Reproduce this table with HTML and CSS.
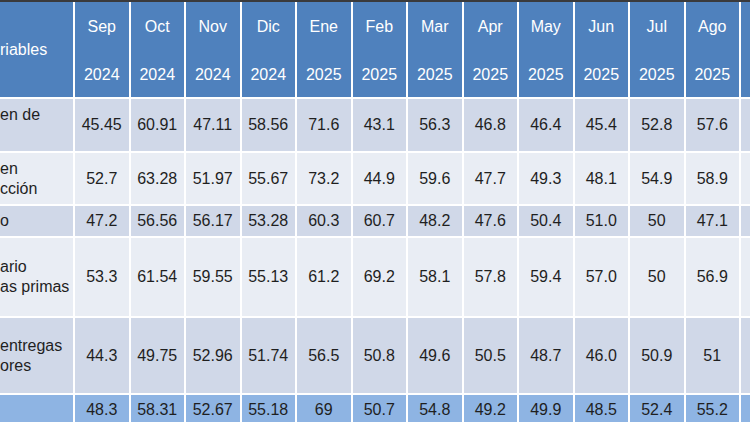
FILE: index.html
```html
<!DOCTYPE html>
<html lang="es">
<head>
<meta charset="utf-8">
<title>Indicadores</title>
<link rel="stylesheet" href="styles.css">
</head>
<body>
<div class="topbar"></div>
<table class="data">
  <thead>
    <tr class="head">
      <th class="lbl">riables</th>
      <th><span class="m">Sep</span><span class="y">2024</span></th>
      <th><span class="m">Oct</span><span class="y">2024</span></th>
      <th><span class="m">Nov</span><span class="y">2024</span></th>
      <th><span class="m">Dic</span><span class="y">2024</span></th>
      <th><span class="m">Ene</span><span class="y">2025</span></th>
      <th><span class="m">Feb</span><span class="y">2025</span></th>
      <th><span class="m">Mar</span><span class="y">2025</span></th>
      <th><span class="m">Apr</span><span class="y">2025</span></th>
      <th><span class="m">May</span><span class="y">2025</span></th>
      <th><span class="m">Jun</span><span class="y">2025</span></th>
      <th><span class="m">Jul</span><span class="y">2025</span></th>
      <th><span class="m">Ago</span><span class="y">2025</span></th>
      <th class="extra"></th>
    </tr>
  </thead>
  <tbody>
    <tr class="r1 dark">
      <td class="lbl">en de<br>&nbsp;</td>
      <td>45.45</td><td>60.91</td><td>47.11</td><td>58.56</td><td>71.6</td><td>43.1</td><td>56.3</td><td>46.8</td><td>46.4</td><td>45.4</td><td>52.8</td><td>57.6</td><td class="extra"></td>
    </tr>
    <tr class="r2 light">
      <td class="lbl">en<br>cción</td>
      <td>52.7</td><td>63.28</td><td>51.97</td><td>55.67</td><td>73.2</td><td>44.9</td><td>59.6</td><td>47.7</td><td>49.3</td><td>48.1</td><td>54.9</td><td>58.9</td><td class="extra"></td>
    </tr>
    <tr class="r3 dark">
      <td class="lbl">o</td>
      <td>47.2</td><td>56.56</td><td>56.17</td><td>53.28</td><td>60.3</td><td>60.7</td><td>48.2</td><td>47.6</td><td>50.4</td><td>51.0</td><td>50</td><td>47.1</td><td class="extra"></td>
    </tr>
    <tr class="r4 light">
      <td class="lbl">ario<br>as primas</td>
      <td>53.3</td><td>61.54</td><td>59.55</td><td>55.13</td><td>61.2</td><td>69.2</td><td>58.1</td><td>57.8</td><td>59.4</td><td>57.0</td><td>50</td><td>56.9</td><td class="extra"></td>
    </tr>
    <tr class="r5 dark">
      <td class="lbl">entregas<br>ores</td>
      <td>44.3</td><td>49.75</td><td>52.96</td><td>51.74</td><td>56.5</td><td>50.8</td><td>49.6</td><td>50.5</td><td>48.7</td><td>46.0</td><td>50.9</td><td>51</td><td class="extra"></td>
    </tr>
    <tr class="r6 total">
      <td class="lbl"></td>
      <td>48.3</td><td>58.31</td><td>52.67</td><td>55.18</td><td>69</td><td>50.7</td><td>54.8</td><td>49.2</td><td>49.9</td><td>48.5</td><td>52.4</td><td>55.2</td><td class="extra"></td>
    </tr>
  </tbody>
</table>
</body>
</html>
```
FILE: styles.css
```css
html, body {
  margin: 0;
  padding: 0;
  background: #ffffff;
  overflow: hidden;
  width: 750px;
  height: 430px;
}

body {
  font-family: "Liberation Sans", Arial, sans-serif;
  font-size: 16px;
  color: #1f1f1f;
}

.topbar {
  height: 2px;
  background: #3a3a3c;
  width: 750px;
}

.data {
  border-collapse: separate;
  border-spacing: 0;
  table-layout: fixed;
  width: 750px;
}

.data th,
.data td {
  box-sizing: border-box;
  width: 55.5px;
  border-right: 2px solid #ffffff;
  border-bottom: 2px solid #ffffff;
  text-align: center;
  white-space: nowrap;
  overflow: hidden;
  padding: 0;
  font-weight: normal;
}

.data th.lbl,
.data td.lbl {
  width: 75px;
  text-align: left;
}

.data th.extra,
.data td.extra {
  width: 9px;
  border-right: 0;
}

.head th {
  background: #4f81bd;
  color: #ffffff;
  height: 97px;
  vertical-align: top;
  padding-top: 13px;
}

.head th.lbl {
  vertical-align: middle;
  padding-top: 0;
}

.m,
.y {
  display: block;
  line-height: 24px;
}

.y {
  margin-top: 24px;
}

tbody td {
  line-height: 20px;
  vertical-align: middle;
  padding-top: 4px;
}

.dark td { background: #d0d8e8; }
.light td { background: #e9edf4; }
.total td { background: #8eb4e3; }

.r1 td { height: 54px; }
.r2 td { height: 53px; }
.r3 td { height: 32px; }
.r4 td { height: 80px; }
.r5 td { height: 77px; }
.r6 td { height: 27px; border-bottom: 0; padding-top: 2px; }
```
